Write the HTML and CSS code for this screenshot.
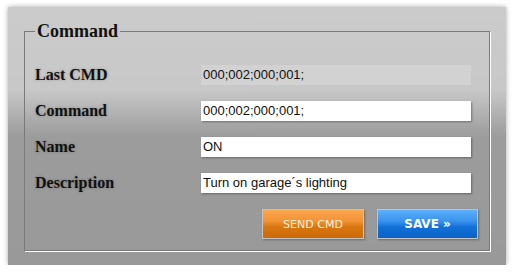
FILE: index.html
```html
<!DOCTYPE html>
<html lang="en">
<head>
  <meta charset="UTF-8" />
  <title>Command</title>
  <link rel="stylesheet" href="styles.css">
</head>
<body>
  <div class="panel">
    <fieldset class="box">
      <legend>Command</legend>
      <div class="rows">
        <label>Last CMD</label>
        <div class="value readonly">000;002;000;001;</div>
        <label for="cmd">Command</label>
        <input class="value" type="text" id="cmd" value="000;002;000;001;" />
        <label for="name">Name</label>
        <input class="value" type="text" id="name" value="ON" />
        <label for="desc">Description</label>
        <input class="value" type="text" id="desc" value="Turn on garage´s lighting" />
      </div>
      <div class="actions">
        <button class="btn send">SEND CMD</button>
        <button class="btn save">SAVE &raquo;</button>
      </div>
    </fieldset>
  </div>
</body>
</html>
```

FILE: styles.css
```css
body {
  margin: 0;
  background: #fff;
}
.panel {
  width: 498px;
  height: 258px;
  margin: 7px 0 0 8px;
  padding: 14px 0 0 16px;
  box-sizing: border-box;
  background: linear-gradient(to bottom, #cbcbcb 0%, #c8c8c8 32%, #9c9c9c 50%, #999 100%);
  box-shadow: 0 0 5px rgba(0, 0, 0, 0.35);
}
.box {
  width: 466px;
  height: 230px;
  box-sizing: border-box;
  margin: 0;
  padding: 23px 10px 0 10px;
  border: 1px solid #7a7a7a;
  box-shadow: 1px 1px 0 #fff;
}
legend {
  padding: 0 2px;
  font: bold 18px "Liberation Serif", serif;
  color: #111;
  line-height: 21px;
}
.rows {
  display: grid;
  grid-template-columns: 166px 270px;
  grid-auto-rows: 20px;
  row-gap: 16px;
}
label {
  font: bold 16px "Liberation Serif", serif;
  line-height: 20px;
  color: #111;
  text-shadow: 0 0 3px rgba(0, 0, 0, 0.25);
}
.value {
  box-sizing: border-box;
  height: 20px;
  margin: 0;
  padding: 0 2px;
  border: none;
  outline: none;
  font: 13px "Liberation Sans", sans-serif;
  line-height: 20px;
  color: #111;
  background: #fff;
  box-shadow: 1px 1px 2px rgba(0, 0, 0, 0.35);
}
.value.readonly {
  background: #d2d2d2;
  box-shadow: none;
}
.actions {
  display: flex;
  justify-content: flex-end;
  gap: 13px;
  margin: 16px 0 0;
  padding-right: 1px;
}
.btn {
  height: 30px;
  border: 1px solid #c4c4c4;
  box-shadow: 1px 1px 2px rgba(0, 0, 0, 0.3);
  font: 11px "DejaVu Sans", sans-serif;
  cursor: pointer;
}
.send {
  width: 102px;
  color: #fff3df;
  background: linear-gradient(to bottom, #fba74f 0%, #f29235 40%, #d87610 60%, #cc6a08 100%);
}
.save {
  width: 101px;
  color: #fff;
  font-weight: bold;
  font-size: 12px;
  background: linear-gradient(to bottom, #5cb0fb 0%, #3a92ee 40%, #1271d8 60%, #0a62c6 100%);
}
```
